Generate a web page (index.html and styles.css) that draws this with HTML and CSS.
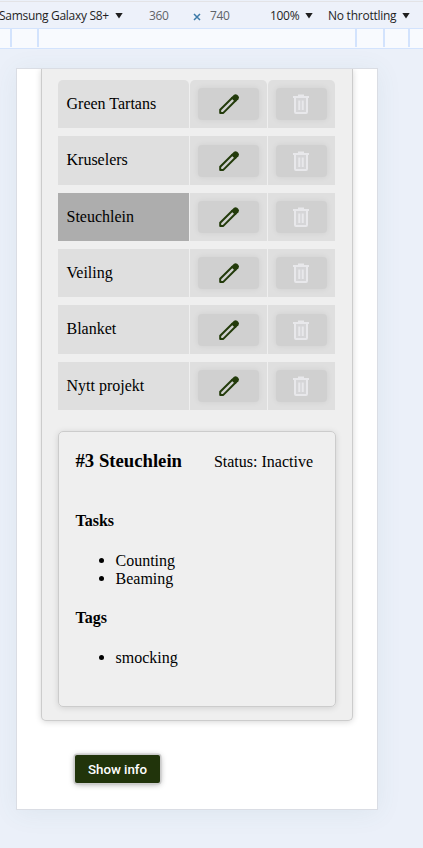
FILE: index.html
```
<!DOCTYPE html>
<html lang="en">
<head>
<meta charset="utf-8">
<title>Projects</title>
<link rel="stylesheet" href="styles.css">
</head>
<body>
<svg class="defs" width="0" height="0">
  <symbol id="pencil" viewBox="0 0 22 22"><path d="M2.200 19.900v-3.100L14.300 4.700l3.100 3.100L5.300 19.900z" fill="none" stroke="currentColor" stroke-width="2" stroke-linejoin="round"/><path d="M13.200 4.600l2.800-2.800q1.600-1.300 3.100 0l1.300 1.300q1.300 1.600 0 3.100L17.600 9z" fill="currentColor"/></symbol>
  <symbol id="trash" viewBox="0 0 18 22"><path d="M3 5h12v15H3z" fill="#d5d5d7"/><path d="M1 4h16M3 4v15q0 1 1 1h10q1 0 1-1V4M7.300 7.500v9.500M10.700 7.500v9.500" fill="none" stroke="currentColor" stroke-width="2"/><path d="M6 1.500h6v3H6z" fill="currentColor"/></symbol>
</svg>
<header class="toolbar">
  <span class="device-name">Samsung Galaxy S8+</span><i class="arrow"></i>
  <span class="size width">360</span><svg class="times" viewBox="0 0 8 8"><path d="M1 1l6 6M7 1L1 7" stroke="#3c7aa8" stroke-width="1.500"/></svg><span class="size height">740</span>
  <span class="zoom">100%</span><i class="arrow"></i>
  <span class="throttle">No throttling</span><i class="arrow"></i>
</header>
<div class="ruler"><i></i><i></i><i></i><i></i><i></i></div>
<main class="device">
  <section class="panel">
    <div class="projects">
      <div class="row"><span class="cell">Green Tartans</span><span class="cell"><button class="tool edit"><svg><use href="#pencil"/></svg></button></span><span class="cell"><button class="tool remove"><svg><use href="#trash"/></svg></button></span></div>
      <div class="row"><span class="cell">Kruselers</span><span class="cell"><button class="tool edit"><svg><use href="#pencil"/></svg></button></span><span class="cell"><button class="tool remove"><svg><use href="#trash"/></svg></button></span></div>
      <div class="row"><span class="cell selected">Steuchlein</span><span class="cell"><button class="tool edit"><svg><use href="#pencil"/></svg></button></span><span class="cell"><button class="tool remove"><svg><use href="#trash"/></svg></button></span></div>
      <div class="row"><span class="cell">Veiling</span><span class="cell"><button class="tool edit"><svg><use href="#pencil"/></svg></button></span><span class="cell"><button class="tool remove"><svg><use href="#trash"/></svg></button></span></div>
      <div class="row"><span class="cell">Blanket</span><span class="cell"><button class="tool edit"><svg><use href="#pencil"/></svg></button></span><span class="cell"><button class="tool remove"><svg><use href="#trash"/></svg></button></span></div>
      <div class="row"><span class="cell">Nytt projekt</span><span class="cell"><button class="tool edit"><svg><use href="#pencil"/></svg></button></span><span class="cell"><button class="tool remove"><svg><use href="#trash"/></svg></button></span></div>
    </div>
    <article class="details">
      <div class="heading"><h3>#3 Steuchlein</h3><span>Status: Inactive</span></div>
      <h4>Tasks</h4>
      <ul><li>Counting</li><li>Beaming</li></ul>
      <h4>Tags</h4>
      <ul><li>smocking</li></ul>
    </article>
  </section>
  <button class="info">Show info</button>
</main>
</body>
</html>
```
FILE: styles.css
```
* { box-sizing: border-box; }
body { margin: 0; height: 848px; overflow: hidden; background: #ebf0f9; color: #000; font: 16px/18px "Liberation Serif", serif; }
.defs { display: block; }
.toolbar { height: 27px; margin-top: 1px; padding-top: 1px; border-top: 1px solid #e3e3e6; display: flex; align-items: center; font: 12px "Open Sans", "Noto Sans", sans-serif; color: #1f1f1f; white-space: nowrap; background: #edf1fa; }
.toolbar span { flex: none; }
.device-name { width: 114px; margin-left: -1px; letter-spacing: -0.3px; }
.arrow { flex: none; width: 8px; height: 6px; margin-left: 2px; background: #1f1f1f; clip-path: polygon(0 0, 100% 0, 50% 100%); }
.size { color: #5f6368; letter-spacing: -0.3px; }
.width { margin-left: 26px; width: 44px; }
.times { flex: none; width: 8px; height: 8px; margin-top: 2px; }
.height { margin-left: 9px; width: 60px; }
.zoom { width: 33px; letter-spacing: -0.3px; }
.throttle { margin-left: 15px; width: 72px; letter-spacing: -0.25px; }
.ruler { height: 21px; border-top: 1px solid #d3e3fd; border-bottom: 1px solid #d3e3fd; background: #f8fafe; display: grid; grid-template-columns: 10px 27px 318px 28px 25px; padding-bottom: 1px; }
.ruler i { border-right: 2px solid #d3e3fd; margin-right: -2px; }
.device { width: 362px; height: 742px; margin: 19px 0 0 16px; border: 1px solid #dadde4; background: #fff; overflow: hidden; box-shadow: 0 3px 24px rgba(70, 110, 110, .08); }
.panel { width: 312px; height: 652px; margin-left: 24px; padding: 11px 16px 0; border: 1px solid #ccc; border-top: 0; border-radius: 0 0 5px 5px; background: #efefef; box-shadow: 0 1px 6px rgba(0, 0, 0, .16); }
.projects { display: grid; gap: 8px; }
.row { display: grid; grid-template-columns: 131px 77px 67px; column-gap: 1px; height: 48.350px; }
.cell { display: flex; align-items: center; padding: 0 8px; background: #dfdfdf; }
.cell:first-child { padding-left: 8.500px; padding-bottom: 0.400px; }
.row:first-child .cell { border-radius: 5px 5px 0 0; }
.cell.selected { background: #adadad; }
.tool { width: 100%; height: 32px; padding: 0; border: 0; border-radius: 4px; background: #d0d0d0; display: flex; align-items: center; justify-content: center; box-shadow: 0 0 6px rgba(0, 0, 0, .07); }
.tool svg { display: block; width: 22px; height: 22px; }
.edit { color: #233b0b; }
.remove { color: #e8e8eb; }
.remove svg { width: 18px; margin-right: 1px; }
.details { width: 278px; height: 276px; margin-top: 21px; padding: 20px 17px 0 16.500px; border: 1px solid #ccc; border-radius: 5px; box-shadow: 0 1px 6px rgba(0, 0, 0, .13); }
.heading { display: flex; justify-content: space-between; padding-right: 5px; }
h3, h4 { margin: 0; }
h3 { font-size: 18.720px; }
.heading span { padding-top: 1px; }
.heading + h4 { margin-top: 41px; }
h4 { font-size: 16px; }
ul { margin: 22px 0 21px; padding-left: 40px; }
li::marker { font-size: 17px; }
.info { display: block; width: 85px; height: 28px; margin: 34px 0 0 58px; padding: 0; border: 0; border-radius: 2px; color: #fff; background: #21340b; font: 500 13.330px Roboto, sans-serif; letter-spacing: -0.05px; box-shadow: 0 0 0 1.500px #ccc, 0 1px 6px rgba(0, 0, 0, .4); }
```
